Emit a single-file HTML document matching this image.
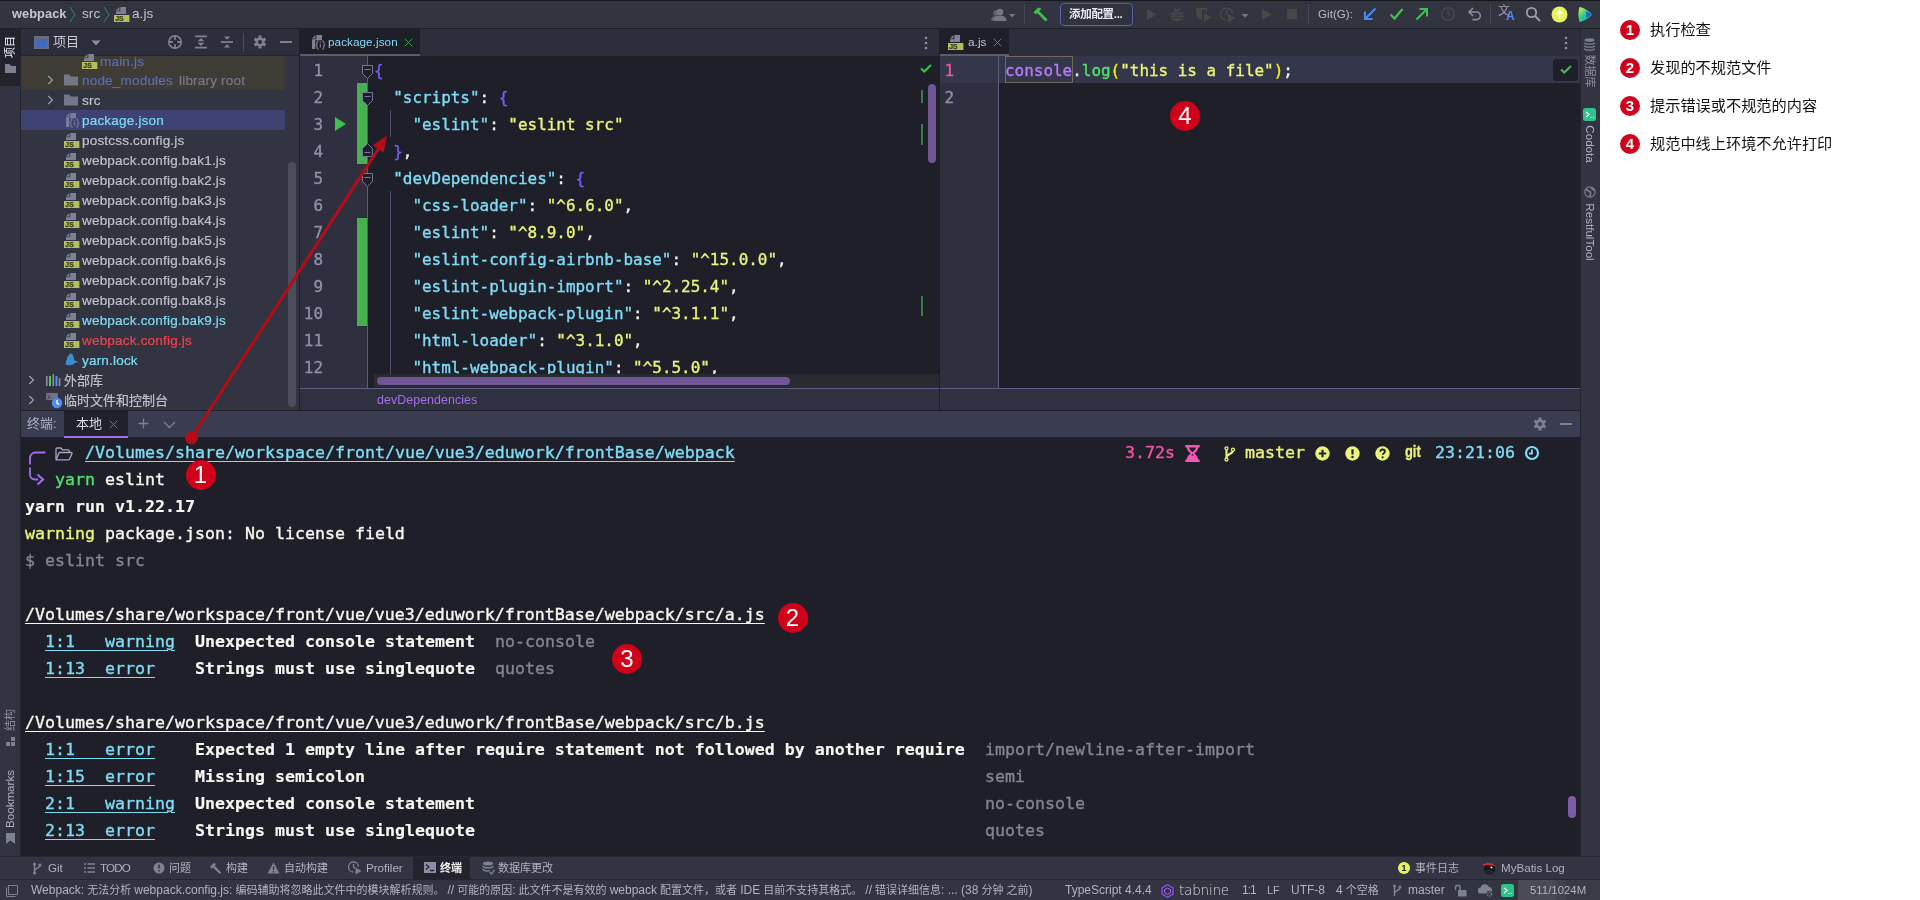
<!DOCTYPE html>
<html lang="zh-CN">
<head>
<meta charset="utf-8">
<title>webpack eslint</title>
<style>
*{box-sizing:border-box;margin:0;padding:0}
html,body{width:1920px;height:900px;overflow:hidden;background:#fff}
body{font-family:"Liberation Sans","Noto Sans CJK SC",sans-serif;font-size:13px;color:#c6c8d1;position:relative}
.abs{position:absolute}
.ui{font-size:13.5px;letter-spacing:0.07px;white-space:nowrap}
.mono{font-family:"DejaVu Sans Mono","Liberation Mono","Noto Sans CJK SC",monospace;font-size:16.6px;letter-spacing:0.006px;white-space:pre}
.mono.ed{font-size:15.95px;letter-spacing:0}
.mono{-webkit-text-stroke:0.35px currentColor}
.mono b{-webkit-text-stroke:0.15px currentColor}
#ide{position:absolute;left:0;top:0;width:1600px;height:900px;background:#1f1f29;overflow:hidden;will-change:transform}
/* top toolbar */
#topbar{left:0;top:0;width:1600px;height:29px;background:#323440;border-top:1px solid #16161d;border-bottom:1px solid #1d1e27}
/* left stripe */
#lstripe{left:0;top:29px;width:21px;height:849px;background:#323442;border-right:1px solid #23242e}
#rstripe{left:1580px;top:29px;width:20px;height:849px;background:#323442;border-left:1px solid #23242e}
/* project panel */
#proj{left:21px;top:29px;width:278px;height:381px;background:#323442;overflow:hidden}
#projhead{left:0;top:0;width:278px;height:27px;background:#2c2e3b;border-bottom:1px solid #23242e}
.row{position:absolute;left:0;width:264px;height:20px;line-height:20px;white-space:nowrap;font-size:13.5px;letter-spacing:0.2px;color:#c0c1c8;-webkit-text-stroke:0.2px currentColor}
.row .cj{font-size:13px;letter-spacing:0}
.row span.t{position:absolute;top:1px}
/* editors */
#ed1{left:300px;top:29px;width:639px;height:381px;background:#1f1f29;overflow:hidden}
#ed2{left:940px;top:29px;width:640px;height:381px;background:#1f1f29;overflow:hidden}
.tabbar{left:0;top:0;width:100%;height:27px;background:#2c2e3b}
.gut{background:#2e3040}
.ln{position:absolute;height:27px;line-height:27px;color:#8f92a8;text-align:right}
.cl{position:absolute;height:27px;line-height:27px}
.k{color:#7fdcf5}.s{color:#eaf37a}.b{color:#6d63f7}.w{color:#f2f2f2}
/* terminal */
#termhead{left:21px;top:411px;width:1559px;height:26px;background:#3a3c52;z-index:2}
#term{left:21px;top:437px;width:1559px;height:419px;background:#1f1f29;overflow:hidden}
.tl{position:absolute;left:4px;height:27px;line-height:27px;color:#f8f8f2}
.u{text-decoration:underline;text-underline-offset:3px;text-decoration-thickness:1px}
.cy{color:#7fdcf5}.gr{color:#84858e}.ye{color:#eaf37a}.gn{color:#50e36a}.pk{color:#f254a8}
b{font-weight:bold}
/* bottom bars */
#toolbar2{left:0;top:856px;width:1600px;height:23px;background:#323442;border-top:1px solid #262731}
#status{left:0;top:879px;width:1600px;height:21px;background:#323442;border-top:1px solid #23242e}
.sb{font-size:11px;line-height:15px;color:#b1b3bf;white-space:nowrap}
.sb .la{font-size:12px;position:relative;top:-0.5px}
/* right notes */
.note{position:absolute;left:1650px;font-size:15.2px;color:#111;line-height:20px;white-space:nowrap;font-family:"Liberation Sans","Noto Sans CJK SC",sans-serif}
.badge{position:absolute;border-radius:50%;background:#d0021b;color:#fff;text-align:center;font-family:"Liberation Sans",sans-serif;font-weight:normal}
</style>
</head>
<body>
<div id="ide">
<div id="topbar" class="abs"><span class="abs ui" style="left:12px;top:5px;font-weight:bold;font-size:12.8px;color:#c3c5cf;line-height:16px">webpack</span>
<svg class="abs" style="left:69px;top:5px" width="8" height="17" viewBox="0 0 8 17"><path d="M1 1l5 7.5L1 16" fill="none" stroke="#2f8f4b" stroke-width="1"/></svg>
<span class="abs ui" style="left:82px;top:5px;color:#c3c5cf;line-height:16px">src</span>
<svg class="abs" style="left:103px;top:5px" width="8" height="17" viewBox="0 0 8 17"><path d="M1 1l5 7.5L1 16" fill="none" stroke="#2f8f4b" stroke-width="1"/></svg>
<svg class="abs" style="left:114px;top:5px" width="16" height="16" viewBox="0 0 16 16"><path d="M6.300000000000001 1H12v7H2V5.300000000000001h4.300000000000001z" fill="#7e8193"/><path d="M2 4.4L5.4 1v3.400000000000001z" fill="#7e8193"/><rect x="0" y="9" width="15.4" height="7" fill="#b3bf5f"/><text x="1.2" y="15.1" font-family="Liberation Sans,sans-serif" font-size="6.8" font-weight="bold" fill="#363c14" stroke="#363c14" stroke-width=".25">JS</text></svg>
<span class="abs ui" style="left:132px;top:5px;color:#c3c5cf;line-height:16px">a.js</span>
<svg class="abs" style="left:990px;top:6px" width="26" height="16" viewBox="0 0 26 16"><circle cx="10" cy="5" r="3.3" fill="#747683"/><path d="M3.5 14c0-4 3-5.500000000000001 6.5-5.500000000000001S16.5 10 16.5 14z" fill="#747683"/><circle cx="6" cy="6" r="2.7" fill="#747683" opacity=".75"/><path d="M1 13.5c0-3 2-4.5 5-4.5l1 4.5z" fill="#747683" opacity=".75"/><path d="M19 7h6.5l-3.25 3.6z" fill="#747683"/></svg>
<div class="abs" style="left:1024px;top:3px;width:1px;height:20px;background:#45475a"></div>
<svg class="abs" style="left:1032px;top:5px" width="17" height="17" viewBox="0 0 17 17"><path d="M1.5 6.2L6.2 1.600000000000001l3.300000000000001 1.1L7.2 5l8.3 8.4-2 2L5.2 7 3.600000000000001 8.6z" fill="#3ec24f"/></svg>
<div class="abs" style="left:1060px;top:2px;width:73px;height:23px;border:1px solid #5560b3;border-radius:4px;background:#30323e"></div>
<span class="abs" style="left:1069px;top:5px;font-size:11.5px;line-height:16px;color:#e8e9ee;font-weight:bold;letter-spacing:-0.3px">添加配置...</span>
<svg class="abs" style="left:1146px;top:7px" width="12" height="13" viewBox="0 0 12 13"><path d="M1 1l10 5.5L1 12z" fill="#484849"/></svg>
<svg class="abs" style="left:1169px;top:5px" width="16" height="16" viewBox="0 0 16 16"><path d="M5 2l1.500000000000001 1.800000000000001M11 2L9.5 3.800000000000001" stroke="#484849" stroke-width="1.3" fill="none"/><path d="M5.2 5.6a2.8 2.6 0 015.6 0z" fill="#484849"/><path d="M3.6 6.4h8.8v4.4a4.4 4.6 0 01-8.8 0z" fill="#484849"/><path d="M1.500000000000001 7.6h2.5M12 7.6h2.5M1.500000000000001 10.6h2.5M12 10.6h2.5M2 14l2.2-1.500000000000001M14 14l-2.2-1.500000000000001" stroke="#484849" stroke-width="1.500000000000001" fill="none"/><path d="M4.6 9h6.800000000000001M4.6 11.9h6.800000000000001" stroke="#323440" stroke-width="0.9"/></svg>
<svg class="abs" style="left:1195px;top:5px" width="17" height="17" viewBox="0 0 17 17"><path d="M1 2h6v12C3.500000000000001 12.5 1 10 1 6z" fill="#484849"/><path d="M7 2h5v4.500000000000001h-1.400000000000001V3.400000000000001H7z" fill="#484849"/><path d="M9 7l7.500000000000001 4.5L9 16z" fill="#484849"/></svg>
<svg class="abs" style="left:1219px;top:5px" width="32" height="17" viewBox="0 0 32 17"><path d="M13.5 8A6 6 0 107.500000000000001 14" fill="none" stroke="#484849" stroke-width="1.5"/><path d="M7.500000000000001 4v4l2.5 2" fill="none" stroke="#484849" stroke-width="1.5"/><path d="M9 8l7.5 4.3L9 16.6z" fill="#484849"/><path d="M22.5 8h7l-3.5 3.800000000000001z" fill="#747683"/></svg>
<svg class="abs" style="left:1261px;top:7px" width="12" height="13" viewBox="0 0 12 13"><path d="M1 1l10 5.5L1 12z" fill="#484849"/></svg>
<div class="abs" style="left:1287px;top:8px;width:10px;height:10px;background:#484849"></div>
<div class="abs" style="left:1308px;top:3px;width:1px;height:20px;background:#45475a"></div>
<span class="abs ui" style="left:1318px;top:5px;color:#b9bbc6;line-height:16px;font-size:11.5px">Git(G):</span>
<svg class="abs" style="left:1363px;top:6px" width="14" height="14" viewBox="0 0 14 14"><path d="M12.5 1.500000000000001L2.5 11.5M2 4.5v7.500000000000001h7.500000000000001" fill="none" stroke="#4c8bf5" stroke-width="2"/></svg>
<svg class="abs" style="left:1389px;top:6px" width="15" height="14" viewBox="0 0 15 14"><path d="M1.500000000000001 7.500000000000001l4 4L13.5 2" fill="none" stroke="#3ec24f" stroke-width="2.2"/></svg>
<svg class="abs" style="left:1415px;top:6px" width="14" height="14" viewBox="0 0 14 14"><path d="M1.500000000000001 12.5L11.5 2.5M4.5 2h7.500000000000001v7.500000000000001" fill="none" stroke="#3ec24f" stroke-width="2"/></svg>
<svg class="abs" style="left:1440px;top:5px" width="16" height="16" viewBox="0 0 16 16"><circle cx="8" cy="8" r="6.3" fill="none" stroke="#484849" stroke-width="1.4"/><path d="M8 4.5V8l2.5 1.500000000000001" fill="none" stroke="#484849" stroke-width="1.4"/></svg>
<svg class="abs" style="left:1467px;top:5px" width="16" height="16" viewBox="0 0 16 16"><path d="M2.5 6h7a3.800000000000001 3.800000000000001 0 010 7.600000000000001H5.5" fill="none" stroke="#8c8fa1" stroke-width="1.600000000000001"/><path d="M6 2L2 6l4 4" fill="none" stroke="#8c8fa1" stroke-width="1.600000000000001"/></svg>
<div class="abs" style="left:1490px;top:3px;width:1px;height:20px;background:#45475a"></div>
<span class="abs" style="left:1498px;top:2px;font-size:12px;line-height:14px;color:#9da0b1;font-family:'Noto Sans CJK SC',sans-serif">文</span><span class="abs" style="left:1506px;top:8px;font-size:12px;line-height:14px;color:#4c8bf5;font-weight:bold;font-family:'Liberation Sans',sans-serif">A</span>
<svg class="abs" style="left:1525px;top:5px" width="16" height="16" viewBox="0 0 16 16"><circle cx="6.5" cy="6.5" r="4.7" fill="none" stroke="#9da0b1" stroke-width="1.8"/><path d="M10 10l5 5" stroke="#9da0b1" stroke-width="2"/></svg>
<svg class="abs" style="left:1551px;top:5px" width="17" height="17" viewBox="0 0 17 17"><circle cx="8.5" cy="8.5" r="8" fill="#e9f35f"/><path d="M8.5 12.5V5M5.5 8l3-3 3 3" fill="none" stroke="#fff" stroke-width="1.600000000000001"/></svg>
<svg class="abs" style="left:1577px;top:5px" width="17" height="17" viewBox="0 0 17 17"><defs><linearGradient id="cg" x1="0" y1="0" x2="1" y2="1"><stop offset="0" stop-color="#f2e94e"/><stop offset=".45" stop-color="#2fcf86"/><stop offset="1" stop-color="#1d8fe8"/></linearGradient></defs><path d="M2.5 1c4 .5 9 3.500000000000001 13 7.500000000000001-4 4-9 7-13 7.500000000000001C1 11 1 6 2.5 1z" fill="url(#cg)"/><path d="M9 5l6.5 3.500000000000001L9 12z" fill="#1b5fd0" opacity=".85"/></svg></div>
<div id="lstripe" class="abs">
<div class="abs" style="left:0;top:0;width:20px;height:57px;background:#22232c"></div>
</div>
<div class="abs" style="left:4px;top:35px;width:12px;height:23px"><span class="abs" style="left:50%;top:50%;transform:translate(-50%,-50%) rotate(-90deg);white-space:nowrap;font-size:11px;line-height:12px;color:#f0f0f4;">项目</span></div>
<svg class="abs" style="left:5px;top:64px" width="11" height="9" viewBox="0 0 11 9"><path d="M0 0h4.500000000000001l1.500000000000001 2H11v7H0z" fill="#7e8193"/></svg>
<div class="abs" style="left:4px;top:708px;width:12px;height:23px"><span class="abs" style="left:50%;top:50%;transform:translate(-50%,-50%) rotate(-90deg);white-space:nowrap;font-size:11px;line-height:12px;color:#8c8fa1;">结构</span></div>
<svg class="abs" style="left:6px;top:737px" width="9" height="9" viewBox="0 0 9 9"><rect x="5" y="0" width="4" height="4" fill="#7e8193"/><rect x="0" y="5" width="4" height="4" fill="#7e8193"/><rect x="5" y="5" width="4" height="4" fill="#7e8193"/></svg>
<div class="abs" style="left:4px;top:770px;width:12px;height:58px"><span class="abs" style="left:50%;top:50%;transform:translate(-50%,-50%) rotate(-90deg);white-space:nowrap;font-size:11.6px;line-height:12px;color:#b1b3bf;">Bookmarks</span></div>
<svg class="abs" style="left:6px;top:833px" width="9" height="11" viewBox="0 0 9 11"><path d="M0 0h9v11L4.500000000000001 7.500000000000001 0 11z" fill="#7e8193"/></svg>
<div id="rstripe" class="abs"></div>
<svg class="abs" style="left:1584px;top:38px" width="11" height="13" viewBox="0 0 11 13"><ellipse cx="5.500000000000001" cy="2" rx="5" ry="1.8" fill="#7e8193"/><path d="M.5 4.5c0 2.2 10 2.2 10 0M.5 7.500000000000001c0 2.2 10 2.2 10 0M.5 10.5c0 2.2 10 2.2 10 0" fill="none" stroke="#7e8193" stroke-width="1.400000000000001"/></svg>
<div class="abs" style="left:1584px;top:54px;width:12px;height:34px"><span class="abs" style="left:50%;top:50%;transform:translate(-50%,-50%) rotate(90deg);white-space:nowrap;font-size:11px;line-height:12px;color:#8c8fa1;">数据库</span></div>
<svg class="abs" style="left:1583px;top:108px" width="13" height="13" viewBox="0 0 13 13"><rect x="0" y="0" width="13" height="13" rx="2.5" fill="#2fc28b"/><path d="M3 4l3 2.5L3 9M7.500000000000001 9.5h1M10 9.5h1" fill="none" stroke="#fff" stroke-width="1.2"/></svg>
<div class="abs" style="left:1584px;top:125px;width:12px;height:38px"><span class="abs" style="left:50%;top:50%;transform:translate(-50%,-50%) rotate(90deg);white-space:nowrap;font-size:11.6px;line-height:12px;color:#b1b3bf;">Codota</span></div>
<svg class="abs" style="left:1584px;top:186px" width="12" height="12" viewBox="0 0 12 12"><circle cx="6" cy="6" r="5.2" fill="none" stroke="#7e8193" stroke-width="1.2"/><path d="M2 3.500000000000001c2 0 2 2 3.500000000000001 2S7 8 5.500000000000001 10.5M7.500000000000001 1.500000000000001c-.5 2 2 2 3 3" fill="none" stroke="#7e8193" stroke-width="1.6"/></svg>
<div class="abs" style="left:1584px;top:203px;width:12px;height:58px"><span class="abs" style="left:50%;top:50%;transform:translate(-50%,-50%) rotate(90deg);white-space:nowrap;font-size:11.6px;line-height:12px;color:#b1b3bf;">RestfulTool</span></div>
<div id="proj" class="abs"><div id="projhead" class="abs">
<svg class="abs" style="left:13px;top:7px" width="15" height="13" viewBox="0 0 15 13"><rect x="0" y="0" width="15" height="13" fill="#6a6d80"/><rect x="1.600000000000001" y="3" width="11.8" height="8.4" fill="#4169c4"/></svg>
<span class="abs" style="left:32px;top:4px;font-size:13px;line-height:18px;color:#c9cbd4">项目</span>
<svg class="abs" style="left:70px;top:11px" width="10" height="6" viewBox="0 0 10 6"><path d="M0.5 0.5h9L5 5.5z" fill="#8c8fa1"/></svg>
<svg class="abs" style="left:146px;top:5px" width="16" height="16" viewBox="0 0 16 16"><circle cx="8" cy="8" r="6.2" fill="none" stroke="#7f8192" stroke-width="1.600000000000001"/><path d="M8 1.500000000000001v4.300000000000001M8 10.2v4.300000000000001M1.500000000000001 8h4.300000000000001M10.2 8h4.300000000000001" stroke="#7f8192" stroke-width="1.8"/></svg>
<svg class="abs" style="left:172px;top:5px" width="16" height="16" viewBox="0 0 16 16"><path d="M2 2.300000000000001h12M2 13.700000000000001h12" stroke="#7f8192" stroke-width="1.8"/><path d="M8 4l3.400000000000001 3.300000000000001H4.6zM8 12l3.400000000000001-3.300000000000001H4.6z" fill="#7f8192"/></svg>
<svg class="abs" style="left:198px;top:5px" width="16" height="16" viewBox="0 0 16 16"><path d="M2 8h12" stroke="#7f8192" stroke-width="1.8"/><path d="M8 5.800000000000001l3.200000000000001-3.300000000000001H4.800000000000001zM8 10.2l3.200000000000001 3.300000000000001H4.800000000000001z" fill="#7f8192"/></svg>
<div class="abs" style="left:222px;top:4px;width:1px;height:19px;background:#4a4c5c"></div>
<svg class="abs" style="left:231.5px;top:6px" width="14" height="14" viewBox="0 0 14 14"><path fill="#7f8192" fill-rule="evenodd" d="M5.45 2.56L5.49 0.57L8.51 0.57L8.55 2.56L10.07 3.44L11.81 2.48L13.32 5.09L11.62 6.12L11.62 7.88L13.32 8.91L11.81 11.52L10.07 10.56L8.55 11.44L8.51 13.43L5.49 13.43L5.45 11.44L3.93 10.56L2.19 11.52L0.68 8.91L2.38 7.88L2.38 6.12L0.68 5.09L2.19 2.48L3.93 3.44zM9.10 7.00a2.1 2.1 0 1 0 -4.20 0a2.1 2.1 0 1 0 4.20 0z"/></svg>
<div class="abs" style="left:259px;top:12px;width:12px;height:2px;background:#7f8192"></div>
</div>
<div class="abs" style="left:0;top:27px;width:264px;height:34px;background:#3f3c35"></div>
<div class="abs" style="left:0;top:81px;width:264px;height:20px;background:#3e4374"></div>
<div class="row" style="top:22px"><svg class="abs" style="left:61px;top:2px" width="16" height="16" viewBox="0 0 16 16"><path d="M6.300000000000001 1H12v7H2V5.300000000000001h4.300000000000001z" fill="#7e8193"/><path d="M2 4.4L5.4 1v3.400000000000001z" fill="#7e8193"/><rect x="0" y="9" width="15.4" height="7" fill="#b3bf5f"/><text x="1.2" y="15.1" font-family="Liberation Sans,sans-serif" font-size="6.8" font-weight="bold" fill="#363c14" stroke="#363c14" stroke-width=".25">JS</text></svg><span class="t" style="left:79px;color:#5f6cb0">main.js</span></div>
<div class="row" style="top:41px"><svg class="abs" style="left:26px;top:4px" width="8" height="12" viewBox="0 0 8 12"><path d="M1.2 2l4.300000000000001 4-4.300000000000001 4" fill="none" stroke="#9da0b1" stroke-width="1.2"/></svg><svg class="abs" style="left:42px;top:2px" width="16" height="16" viewBox="0 0 16 16"><path d="M1 2.5h5.2l1.6 2H15V13.5H1z" fill="#747789"/></svg><span class="t" style="left:61px;color:#5f6cb0">node_modules</span><span class="t" style="left:158px;color:#777a8a">library root</span></div>
<div class="row" style="top:61px"><svg class="abs" style="left:26px;top:4px" width="8" height="12" viewBox="0 0 8 12"><path d="M1.2 2l4.300000000000001 4-4.300000000000001 4" fill="none" stroke="#9da0b1" stroke-width="1.2"/></svg><svg class="abs" style="left:42px;top:2px" width="16" height="16" viewBox="0 0 16 16"><path d="M1 2.5h5.2l1.6 2H15V13.5H1z" fill="#747789"/></svg><span class="t" style="left:61px;color:#c0c1c8">src</span></div>
<div class="row" style="top:81px"><svg class="abs" style="left:43px;top:2px" width="16" height="16" viewBox="0 0 16 16"><path d="M6.300000000000001 1H12v14H2V5.300000000000001h4.300000000000001z" fill="#7a7e9c"/><path d="M2 4.4L5.4 1v3.400000000000001z" fill="#7a7e9c"/><path d="M5.2 6.2H16V16H5.2z" fill="#3e4374"/><path d="M8.6 6.800000000000001c-1.3 0-1.6.6-1.6 1.500000000000001v1.3c0 .8-.4 1.3-1.3 1.400000000000001.9.1 1.3.6 1.3 1.400000000000001v1.3c0 .9.3 1.500000000000001 1.6 1.500000000000001M12.2 6.800000000000001c1.3 0 1.6.6 1.6 1.500000000000001v1.3c0 .8.4 1.3 1.3 1.400000000000001-.9.1-1.3.6-1.3 1.400000000000001v1.3c0 .9-.3 1.500000000000001-1.6 1.500000000000001M10.4 10v3.400000000000001" fill="none" stroke="#7a7e9c" stroke-width="1.1"/><circle cx="10.4" cy="8.3" r=".75" fill="#7a7e9c"/></svg><span class="t" style="left:61px;color:#7fdcf5">package.json</span></div>
<div class="row" style="top:101px"><svg class="abs" style="left:43px;top:2px" width="16" height="16" viewBox="0 0 16 16"><path d="M6.300000000000001 1H12v7H2V5.300000000000001h4.300000000000001z" fill="#7e8193"/><path d="M2 4.4L5.4 1v3.400000000000001z" fill="#7e8193"/><rect x="0" y="9" width="15.4" height="7" fill="#b3bf5f"/><text x="1.2" y="15.1" font-family="Liberation Sans,sans-serif" font-size="6.8" font-weight="bold" fill="#363c14" stroke="#363c14" stroke-width=".25">JS</text></svg><span class="t" style="left:61px;color:#c0c1c8">postcss.config.js</span></div>
<div class="row" style="top:121px"><svg class="abs" style="left:43px;top:2px" width="16" height="16" viewBox="0 0 16 16"><path d="M6.300000000000001 1H12v7H2V5.300000000000001h4.300000000000001z" fill="#7e8193"/><path d="M2 4.4L5.4 1v3.400000000000001z" fill="#7e8193"/><rect x="0" y="9" width="15.4" height="7" fill="#b3bf5f"/><text x="1.2" y="15.1" font-family="Liberation Sans,sans-serif" font-size="6.8" font-weight="bold" fill="#363c14" stroke="#363c14" stroke-width=".25">JS</text></svg><span class="t" style="left:61px;color:#c0c1c8">webpack.config.bak1.js</span></div>
<div class="row" style="top:141px"><svg class="abs" style="left:43px;top:2px" width="16" height="16" viewBox="0 0 16 16"><path d="M6.300000000000001 1H12v7H2V5.300000000000001h4.300000000000001z" fill="#7e8193"/><path d="M2 4.4L5.4 1v3.400000000000001z" fill="#7e8193"/><rect x="0" y="9" width="15.4" height="7" fill="#b3bf5f"/><text x="1.2" y="15.1" font-family="Liberation Sans,sans-serif" font-size="6.8" font-weight="bold" fill="#363c14" stroke="#363c14" stroke-width=".25">JS</text></svg><span class="t" style="left:61px;color:#c0c1c8">webpack.config.bak2.js</span></div>
<div class="row" style="top:161px"><svg class="abs" style="left:43px;top:2px" width="16" height="16" viewBox="0 0 16 16"><path d="M6.300000000000001 1H12v7H2V5.300000000000001h4.300000000000001z" fill="#7e8193"/><path d="M2 4.4L5.4 1v3.400000000000001z" fill="#7e8193"/><rect x="0" y="9" width="15.4" height="7" fill="#b3bf5f"/><text x="1.2" y="15.1" font-family="Liberation Sans,sans-serif" font-size="6.8" font-weight="bold" fill="#363c14" stroke="#363c14" stroke-width=".25">JS</text></svg><span class="t" style="left:61px;color:#c0c1c8">webpack.config.bak3.js</span></div>
<div class="row" style="top:181px"><svg class="abs" style="left:43px;top:2px" width="16" height="16" viewBox="0 0 16 16"><path d="M6.300000000000001 1H12v7H2V5.300000000000001h4.300000000000001z" fill="#7e8193"/><path d="M2 4.4L5.4 1v3.400000000000001z" fill="#7e8193"/><rect x="0" y="9" width="15.4" height="7" fill="#b3bf5f"/><text x="1.2" y="15.1" font-family="Liberation Sans,sans-serif" font-size="6.8" font-weight="bold" fill="#363c14" stroke="#363c14" stroke-width=".25">JS</text></svg><span class="t" style="left:61px;color:#c0c1c8">webpack.config.bak4.js</span></div>
<div class="row" style="top:201px"><svg class="abs" style="left:43px;top:2px" width="16" height="16" viewBox="0 0 16 16"><path d="M6.300000000000001 1H12v7H2V5.300000000000001h4.300000000000001z" fill="#7e8193"/><path d="M2 4.4L5.4 1v3.400000000000001z" fill="#7e8193"/><rect x="0" y="9" width="15.4" height="7" fill="#b3bf5f"/><text x="1.2" y="15.1" font-family="Liberation Sans,sans-serif" font-size="6.8" font-weight="bold" fill="#363c14" stroke="#363c14" stroke-width=".25">JS</text></svg><span class="t" style="left:61px;color:#c0c1c8">webpack.config.bak5.js</span></div>
<div class="row" style="top:221px"><svg class="abs" style="left:43px;top:2px" width="16" height="16" viewBox="0 0 16 16"><path d="M6.300000000000001 1H12v7H2V5.300000000000001h4.300000000000001z" fill="#7e8193"/><path d="M2 4.4L5.4 1v3.400000000000001z" fill="#7e8193"/><rect x="0" y="9" width="15.4" height="7" fill="#b3bf5f"/><text x="1.2" y="15.1" font-family="Liberation Sans,sans-serif" font-size="6.8" font-weight="bold" fill="#363c14" stroke="#363c14" stroke-width=".25">JS</text></svg><span class="t" style="left:61px;color:#c0c1c8">webpack.config.bak6.js</span></div>
<div class="row" style="top:241px"><svg class="abs" style="left:43px;top:2px" width="16" height="16" viewBox="0 0 16 16"><path d="M6.300000000000001 1H12v7H2V5.300000000000001h4.300000000000001z" fill="#7e8193"/><path d="M2 4.4L5.4 1v3.400000000000001z" fill="#7e8193"/><rect x="0" y="9" width="15.4" height="7" fill="#b3bf5f"/><text x="1.2" y="15.1" font-family="Liberation Sans,sans-serif" font-size="6.8" font-weight="bold" fill="#363c14" stroke="#363c14" stroke-width=".25">JS</text></svg><span class="t" style="left:61px;color:#c0c1c8">webpack.config.bak7.js</span></div>
<div class="row" style="top:261px"><svg class="abs" style="left:43px;top:2px" width="16" height="16" viewBox="0 0 16 16"><path d="M6.300000000000001 1H12v7H2V5.300000000000001h4.300000000000001z" fill="#7e8193"/><path d="M2 4.4L5.4 1v3.400000000000001z" fill="#7e8193"/><rect x="0" y="9" width="15.4" height="7" fill="#b3bf5f"/><text x="1.2" y="15.1" font-family="Liberation Sans,sans-serif" font-size="6.8" font-weight="bold" fill="#363c14" stroke="#363c14" stroke-width=".25">JS</text></svg><span class="t" style="left:61px;color:#c0c1c8">webpack.config.bak8.js</span></div>
<div class="row" style="top:281px"><svg class="abs" style="left:43px;top:2px" width="16" height="16" viewBox="0 0 16 16"><path d="M6.300000000000001 1H12v7H2V5.300000000000001h4.300000000000001z" fill="#7e8193"/><path d="M2 4.4L5.4 1v3.400000000000001z" fill="#7e8193"/><rect x="0" y="9" width="15.4" height="7" fill="#b3bf5f"/><text x="1.2" y="15.1" font-family="Liberation Sans,sans-serif" font-size="6.8" font-weight="bold" fill="#363c14" stroke="#363c14" stroke-width=".25">JS</text></svg><span class="t" style="left:61px;color:#7fdcf5">webpack.config.bak9.js</span></div>
<div class="row" style="top:301px"><svg class="abs" style="left:43px;top:2px" width="16" height="16" viewBox="0 0 16 16"><path d="M6.300000000000001 1H12v7H2V5.300000000000001h4.300000000000001z" fill="#7e8193"/><path d="M2 4.4L5.4 1v3.400000000000001z" fill="#7e8193"/><rect x="0" y="9" width="15.4" height="7" fill="#b3bf5f"/><text x="1.2" y="15.1" font-family="Liberation Sans,sans-serif" font-size="6.8" font-weight="bold" fill="#363c14" stroke="#363c14" stroke-width=".25">JS</text></svg><span class="t" style="left:61px;color:#f0454f">webpack.config.js</span></div>
<div class="row" style="top:321px"><svg class="abs" style="left:43px;top:3px" width="15" height="14" viewBox="0 0 15 14"><path d="M7.500000000000001 0.3c1 .5 1.500000000000001 1.500000000000001 1.400000000000001 2.6.9.8 1.3 2 1.1 3.3.1 1.100000000000001.9 1.600000000000001 2.1 1.700000000000001.9.1 1.500000000000001.3 1.500000000000001.8 0 .5-.6.7-1.3.9-1.300000000000001.4-2.1 1.200000000000001-3.2 1.8-1.600000000000001.9-4 1-6.2.5-1-.2-1.500000000000001-.7-1.500000000000001-1.400000000000001 0-.5.3-.9.8-1.100000000000001-.4-1.200000000000001 0-2.3.8-3-.2-1.300000000000001.2-2.500000000000001 1.100000000000001-3.300000000000001C4.800000000000001 2 5.700000000000001.8 7.500000000000001.3z" fill="#3a8ec9"/></svg><span class="t" style="left:61px;color:#7fdcf5">yarn.lock</span></div>
<div class="row" style="top:341px"><svg class="abs" style="left:7px;top:4px" width="8" height="12" viewBox="0 0 8 12"><path d="M1.2 2l4.300000000000001 4-4.300000000000001 4" fill="none" stroke="#9da0b1" stroke-width="1.2"/></svg><svg class="abs" style="left:24px;top:2px" width="16" height="16" viewBox="0 0 16 16"><rect x="1" y="4" width="1.6" height="10" fill="#8c8fa1"/><rect x="4" y="4" width="2" height="10" fill="#4dcb57"/><rect x="7.5" y="2" width="1.6" height="12" fill="#8c8fa1"/><rect x="10.5" y="4" width="2" height="10" fill="#4f8df7"/><rect x="13.800000000000001" y="6" width="1.6" height="8" fill="#8c8fa1"/></svg><span class="t" style="left:43px;color:#c0c1c8"><span class="cj">外部库</span></span></div>
<div class="row" style="top:361px"><svg class="abs" style="left:7px;top:4px" width="8" height="12" viewBox="0 0 8 12"><path d="M1.2 2l4.300000000000001 4-4.300000000000001 4" fill="none" stroke="#9da0b1" stroke-width="1.2"/></svg><svg class="abs" style="left:24px;top:1px" width="18" height="18" viewBox="0 0 18 18"><path d="M1 2h12v7H1z" fill="#6f7284"/><path d="M2.5 4l2.5 2-2.5 2" stroke="#323442" stroke-width="1" fill="none"/><circle cx="12" cy="12" r="5.2" fill="#4f8df7"/><path d="M12 9v3.300000000000001l2.2 1.2" stroke="#fff" stroke-width="1.3" fill="none"/></svg><span class="t" style="left:43px;color:#c0c1c8"><span class="cj">临时文件和控制台</span></span></div>
<div class="abs" style="left:267px;top:133px;width:8px;height:245px;border-radius:4px;background:#4b4d5d"></div></div>
<div id="ed1" class="abs"><div class="tabbar abs"></div>
<div class="abs" style="left:0;top:0;width:120px;height:27px;background:#1f1f29;border-bottom:2px solid #5c5d69"></div>
<svg class="abs" style="left:10px;top:5px" width="16" height="16" viewBox="0 0 16 16"><path d="M6.300000000000001 1H12v14H2V5.300000000000001h4.300000000000001z" fill="#7e8193"/><path d="M2 4.4L5.4 1v3.400000000000001z" fill="#7e8193"/><path d="M5.2 6.2H16V16H5.2z" fill="#20212b"/><path d="M8.6 6.800000000000001c-1.3 0-1.6.6-1.6 1.500000000000001v1.3c0 .8-.4 1.3-1.3 1.400000000000001.9.1 1.3.6 1.3 1.400000000000001v1.3c0 .9.3 1.500000000000001 1.6 1.500000000000001M12.2 6.800000000000001c1.3 0 1.6.6 1.6 1.500000000000001v1.3c0 .8.4 1.3 1.3 1.400000000000001-.9.1-1.3.6-1.3 1.400000000000001v1.3c0 .9-.3 1.500000000000001-1.6 1.500000000000001M10.4 10v3.400000000000001" fill="none" stroke="#7e8193" stroke-width="1.1"/><circle cx="10.4" cy="8.3" r=".75" fill="#7e8193"/></svg>
<span class="abs ui" style="left:28px;top:4px;line-height:18px;font-size:11.7px;color:#7fdcf5">package.json</span>
<svg class="abs" style="left:104px;top:9px" width="9" height="9" viewBox="0 0 9 9"><path d="M0.7 0.7l7.6 7.6M8.3 0.7L0.7 8.3" stroke="#35a24a" stroke-width="1"/></svg>
<svg class="abs" style="left:624px;top:7px" width="4" height="14" viewBox="0 0 4 14"><circle cx="2" cy="2" r="1.3" fill="#8c8fa1"/><circle cx="2" cy="7" r="1.3" fill="#8c8fa1"/><circle cx="2" cy="12" r="1.3" fill="#8c8fa1"/></svg>
<div class="abs" style="left:0;top:27px;width:67px;height:332px;background:#302f40"></div>
<div class="abs" style="left:67px;top:27px;width:1px;height:332px;background:#5b5d7d"></div>
<div class="abs" style="left:57px;top:54px;width:10px;height:81px;background:#47b04f"></div>
<div class="abs" style="left:57px;top:189px;width:10px;height:108px;background:#47b04f"></div>
<div class="ln mono ed" style="left:0;width:23px;top:28px">1</div>
<div class="ln mono ed" style="left:0;width:23px;top:55px">2</div>
<div class="ln mono ed" style="left:0;width:23px;top:82px">3</div>
<div class="ln mono ed" style="left:0;width:23px;top:109px">4</div>
<div class="ln mono ed" style="left:0;width:23px;top:136px">5</div>
<div class="ln mono ed" style="left:0;width:23px;top:163px">6</div>
<div class="ln mono ed" style="left:0;width:23px;top:190px">7</div>
<div class="ln mono ed" style="left:0;width:23px;top:217px">8</div>
<div class="ln mono ed" style="left:0;width:23px;top:244px">9</div>
<div class="ln mono ed" style="left:0;width:23px;top:271px">10</div>
<div class="ln mono ed" style="left:0;width:23px;top:298px">11</div>
<div class="ln mono ed" style="left:0;width:23px;top:325px">12</div>
<svg class="abs" style="left:35px;top:88px" width="11" height="14" viewBox="0 0 11 14"><path d="M0 0l11 7L0 14z" fill="#3ec24f"/></svg>
<div class="abs" style="left:90px;top:81px;width:1px;height:27px;background:#4a4c66"></div>
<div class="abs" style="left:90px;top:162px;width:1px;height:200px;background:#4a4c66"></div>
<svg class="abs" style="left:62.0px;top:36px" width="11" height="14" viewBox="0 0 11 14"><path d="M0.5 0.5h10v8l-5 5-5-5z" fill="#1f1f29" stroke="#77759a" stroke-width="1"/><path d="M2.5 4.5h6" stroke="#77759a" stroke-width="1"/></svg>
<svg class="abs" style="left:62.0px;top:63px" width="11" height="14" viewBox="0 0 11 14"><path d="M0.5 0.5h10v8l-5 5-5-5z" fill="#1f1f29" stroke="#77759a" stroke-width="1"/><path d="M2.5 4.5h6" stroke="#77759a" stroke-width="1"/></svg>
<svg class="abs" style="left:62.0px;top:113.5px" width="11" height="14" viewBox="0 0 11 14"><path d="M0.5 13.5h10v-8l-5-5-5 5z" fill="#1f1f29" stroke="#77759a" stroke-width="1"/><path d="M2.5 9.5h6" stroke="#77759a" stroke-width="1"/></svg>
<svg class="abs" style="left:62.0px;top:144px" width="11" height="14" viewBox="0 0 11 14"><path d="M0.5 0.5h10v8l-5 5-5-5z" fill="#1f1f29" stroke="#77759a" stroke-width="1"/><path d="M2.5 4.5h6" stroke="#77759a" stroke-width="1"/></svg>
<div class="cl mono ed" style="left:74px;top:28px"><span class="b">{</span></div>
<div class="cl mono ed" style="left:74px;top:55px">  <span class="k">"scripts"</span><span class="w">: </span><span class="b">{</span></div>
<div class="cl mono ed" style="left:74px;top:82px">    <span class="k">"eslint"</span><span class="w">: </span><span class="s">"eslint src"</span></div>
<div class="cl mono ed" style="left:74px;top:109px">  <span class="b">}</span><span class="w">,</span></div>
<div class="cl mono ed" style="left:74px;top:136px">  <span class="k">"devDependencies"</span><span class="w">: </span><span class="b">{</span></div>
<div class="cl mono ed" style="left:74px;top:163px">    <span class="k">"css-loader"</span><span class="w">: </span><span class="s">"^6.6.0"</span><span class="w">,</span></div>
<div class="cl mono ed" style="left:74px;top:190px">    <span class="k">"eslint"</span><span class="w">: </span><span class="s">"^8.9.0"</span><span class="w">,</span></div>
<div class="cl mono ed" style="left:74px;top:217px">    <span class="k">"eslint-config-airbnb-base"</span><span class="w">: </span><span class="s">"^15.0.0"</span><span class="w">,</span></div>
<div class="cl mono ed" style="left:74px;top:244px">    <span class="k">"eslint-plugin-import"</span><span class="w">: </span><span class="s">"^2.25.4"</span><span class="w">,</span></div>
<div class="cl mono ed" style="left:74px;top:271px">    <span class="k">"eslint-webpack-plugin"</span><span class="w">: </span><span class="s">"^3.1.1"</span><span class="w">,</span></div>
<div class="cl mono ed" style="left:74px;top:298px">    <span class="k">"html-loader"</span><span class="w">: </span><span class="s">"^3.1.0"</span><span class="w">,</span></div>
<div class="cl mono ed" style="left:74px;top:325px">    <span class="k">"html-webpack-plugin"</span><span class="w">: </span><span class="s">"^5.5.0"</span><span class="w">,</span></div>
<svg class="abs" style="left:620px;top:35px" width="12" height="9" viewBox="0 0 12 9"><path d="M1 4.500000000000001l3.300000000000001 3L11 1" fill="none" stroke="#35c24a" stroke-width="2.2"/></svg>
<div class="abs" style="left:621px;top:61px;width:2px;height:13px;background:#3d7a48"></div>
<div class="abs" style="left:621px;top:95px;width:2px;height:21px;background:#3d7a48"></div>
<div class="abs" style="left:621px;top:267px;width:2px;height:20px;background:#3d7a48"></div>
<div class="abs" style="left:628px;top:55px;width:8px;height:79px;border-radius:4px;background:#6f5596"></div>
<div class="abs" style="left:74px;top:345px;width:565px;height:14px;background:#2a2b30"></div>
<div class="abs" style="left:77px;top:348px;width:413px;height:8px;border-radius:4px;background:#6f5596"></div>
<div class="abs" style="left:0;top:359px;width:639px;height:22px;background:#2f3040;border-top:1px solid #5b5d82"></div>
<span class="abs ui" style="left:77px;top:363px;font-size:12.4px;line-height:16px;color:#a36fe8">devDependencies</span></div>
<div id="ed2" class="abs"><div class="tabbar abs"></div>
<div class="abs" style="left:0;top:0;width:69px;height:27px;background:#1f1f29;border-bottom:2px solid #5c5d69"></div>
<svg class="abs" style="left:8px;top:5px" width="16" height="16" viewBox="0 0 16 16"><path d="M6.300000000000001 1H12v7H2V5.300000000000001h4.300000000000001z" fill="#7e8193"/><path d="M2 4.4L5.4 1v3.400000000000001z" fill="#7e8193"/><rect x="0" y="9" width="15.4" height="7" fill="#b3bf5f"/><text x="1.2" y="15.1" font-family="Liberation Sans,sans-serif" font-size="6.8" font-weight="bold" fill="#363c14" stroke="#363c14" stroke-width=".25">JS</text></svg>
<span class="abs ui" style="left:28px;top:4px;line-height:18px;font-size:11.7px;color:#c3c5cf">a.js</span>
<svg class="abs" style="left:53px;top:9px" width="9" height="9" viewBox="0 0 9 9"><path d="M0.7 0.7l7.6 7.6M8.3 0.7L0.7 8.3" stroke="#35a24a" stroke-width="1"/></svg>
<svg class="abs" style="left:624px;top:7px" width="4" height="14" viewBox="0 0 4 14"><circle cx="2" cy="2" r="1.3" fill="#8c8fa1"/><circle cx="2" cy="7" r="1.3" fill="#8c8fa1"/><circle cx="2" cy="12" r="1.3" fill="#8c8fa1"/></svg>
<div class="abs" style="left:0;top:27px;width:58px;height:332px;background:#302f40"></div>
<div class="abs" style="left:0;top:27px;width:640px;height:27px;background:#343649"></div>
<div class="abs" style="left:58px;top:27px;width:1px;height:332px;background:#5b5d7d"></div>
<div class="ln mono ed" style="left:0;width:14px;top:28px;color:#f254a8">1</div>
<div class="ln mono ed" style="left:0;width:14px;top:55px">2</div>
<div class="abs" style="left:65px;top:27px;width:68px;height:27px;border:1px solid #6f6a5b"></div>
<div class="cl mono ed" style="left:65px;top:28px"><span style="color:#b77bf7">console</span><span class="w">.</span><span style="color:#50e36a">log</span><span style="color:#f4f01a">(</span><span class="s">"this is a file"</span><span style="color:#f4f01a">)</span><span class="w">;</span></div>
<div class="abs" style="left:613px;top:30px;width:25px;height:22px;border-radius:3px;background:#1f1f29"></div>
<svg class="abs" style="left:620px;top:36px" width="12" height="9" viewBox="0 0 12 9"><path d="M1 4.500000000000001l3.300000000000001 3L11 1" fill="none" stroke="#35c24a" stroke-width="2.2"/></svg>
<div class="abs" style="left:0;top:359px;width:640px;height:22px;background:#2f3040;border-top:1px solid #5b5d82"></div></div>
<div id="termhead" class="abs">
<span class="abs" style="left:6px;top:4px;font-size:13px;line-height:18px;color:#b4b6c2">终端:</span>
<div class="abs" style="left:43px;top:0;width:64px;height:27px;background:#20212b;border-bottom:2px solid #a36fe8"></div>
<span class="abs" style="left:55px;top:4px;font-size:13px;line-height:18px;color:#d6d8e0">本地</span>
<svg class="abs" style="left:88px;top:9px" width="9" height="9" viewBox="0 0 9 9"><path d="M0.7 0.7l7.6 7.6M8.3 0.7L0.7 8.3" stroke="#35a24a" stroke-width="1"/></svg>
<svg class="abs" style="left:117px;top:7px" width="11" height="11" viewBox="0 0 11 11"><path d="M5.5 0.5v10M0.5 5.5h10" stroke="#7e8193" stroke-width="1.3"/></svg>
<svg class="abs" style="left:142px;top:10px" width="13" height="8" viewBox="0 0 13 8"><path d="M1 1l5.5 5.5L12 1" fill="none" stroke="#7e8193" stroke-width="1.3"/></svg>
<svg class="abs" style="left:1512px;top:6px" width="14" height="14" viewBox="0 0 14 14"><path fill="#7e8193" fill-rule="evenodd" d="M5.45 2.56L5.49 0.57L8.51 0.57L8.55 2.56L10.07 3.44L11.81 2.48L13.32 5.09L11.62 6.12L11.62 7.88L13.32 8.91L11.81 11.52L10.07 10.56L8.55 11.44L8.51 13.43L5.49 13.43L5.45 11.44L3.93 10.56L2.19 11.52L0.68 8.91L2.38 7.88L2.38 6.12L0.68 5.09L2.19 2.48L3.93 3.44zM9.10 7.00a2.1 2.1 0 1 0 -4.20 0a2.1 2.1 0 1 0 4.20 0z"/></svg>
<div class="abs" style="left:1539px;top:12px;width:12px;height:1.5px;background:#7e8193"></div>
</div>
<div id="term" class="abs">
<svg class="abs" style="left:5px;top:12px" width="22" height="40" viewBox="0 0 22 40"><path d="M19.5 3.5H9.5a5.5 5.5 0 00-5.500000000000001 5.500000000000001V15.5" fill="none" stroke="#a36fe8" stroke-width="1.8"/><path d="M4 18.5V25.5a5 5 0 005 5H12" fill="none" stroke="#a36fe8" stroke-width="1.8"/><path d="M11.5 25.5l5.500000000000001 5-5.500000000000001 5" fill="none" stroke="#a36fe8" stroke-width="2.1"/></svg>
<svg class="abs" style="left:34px;top:10px" width="18" height="14" viewBox="0 0 18 14"><path d="M1 12.5V2.2c0-.7.5-1.200000000000001 1.200000000000001-1.200000000000001h3.6l1.7 1.8h5.6c.7 0 1.200000000000001.5 1.200000000000001 1.200000000000001V5.5" fill="none" stroke="#a9a4c4" stroke-width="1.3"/><path d="M1.2 12.8l2.6-6.600000000000001c.2-.5.6-.7 1.1-.7h11.3c.7 0 1 .6.7 1.200000000000001l-2.4 5.500000000000001c-.2.5-.6.7-1.1.7H1.5z" fill="none" stroke="#a9a4c4" stroke-width="1.3"/></svg>
<div class="tl mono " style="left:64px;top:2px;"><span class="u cy">/Volumes/share/workspace/front/vue/vue3/eduwork/frontBase/webpack</span></div>
<div class="tl mono " style="left:1104px;top:2px;"><span class="pk">3.72s</span></div>
<svg class="abs" style="left:1164px;top:8px" width="15" height="17" viewBox="0 0 15 17"><path d="M0.3 0h14.4v2.6h-1.6c0 3.2-2.400000000000001 4.4-3.6 5.900000000000001 1.200000000000001 1.500000000000001 3.6 2.700000000000001 3.6 5.900000000000001h1.6V17H0.3v-2.6h1.6c0-3.2 2.400000000000001-4.4 3.6-5.900000000000001C4.300000000000001 7 1.900000000000001 5.800000000000001 1.900000000000001 2.600000000000001H0.3z" fill="#f258b4"/><path d="M4 2.600000000000001h7c-.2 2-1.8 3-3.500000000000001 4.700000000000001C5.800000000000001 5.600000000000001 4.2 4.600000000000001 4 2.600000000000001z" fill="#1f1f29"/><path d="M6.2 10.4c.5-.5 1-.9 1.3-1.3.3.4.8.8 1.3 1.3z" fill="#1f1f29"/></svg>
<svg class="abs" style="left:1203px;top:8.5px" width="12" height="16" viewBox="0 0 12 16"><path d="M2.5 3v10M9 4.5c0 4-6.500000000000001 3-6.500000000000001 7" fill="none" stroke="#eaf37a" stroke-width="2.1"/><circle cx="2.5" cy="2.3" r="1.5" fill="#1f1f29" stroke="#eaf37a" stroke-width="1.3"/><circle cx="2.5" cy="13.5" r="1.5" fill="#1f1f29" stroke="#eaf37a" stroke-width="1.3"/><circle cx="9" cy="3.7" r="1.5" fill="#1f1f29" stroke="#eaf37a" stroke-width="1.3"/></svg>
<div class="tl mono " style="left:1224px;top:2px;"><span class="ye">master</span></div>
<svg class="abs" style="left:1293.5px;top:8.800000000000011px" width="15" height="15" viewBox="0 0 15 15"><circle cx="7.5" cy="7.5" r="7.2" fill="#eaf37a"/><path d="M7.500000000000001 3.8v7.4M3.8 7.500000000000001h7.4" stroke="#1f1f29" stroke-width="2.1" fill="none"/></svg>
<svg class="abs" style="left:1323.5px;top:8.800000000000011px" width="15" height="15" viewBox="0 0 15 15"><circle cx="7.5" cy="7.5" r="7.2" fill="#eaf37a"/><path d="M7.500000000000001 3.3v5.2" stroke="#1f1f29" stroke-width="2.2" fill="none"/><circle cx="7.500000000000001" cy="11" r="1.25" fill="#1f1f29"/></svg>
<svg class="abs" style="left:1353.5px;top:8.800000000000011px" width="15" height="15" viewBox="0 0 15 15"><circle cx="7.5" cy="7.5" r="7.2" fill="#eaf37a"/><path d="M5.300000000000001 5.800000000000001c0-1.500000000000001 1-2.3 2.3-2.3 1.3 0 2.300000000000001.8 2.300000000000001 2 0 1.700000000000001-2.2 1.600000000000001-2.2 3.300000000000001" stroke="#1f1f29" stroke-width="1.8" fill="none"/><circle cx="7.600000000000001" cy="11.3" r="1.1500000000000001" fill="#1f1f29"/></svg>
<span id="gitlbl" class="abs" style="left:1383.5px;top:4px;font:bold 16.5px/20px 'Liberation Sans',sans-serif;color:#eaf37a;transform:scaleX(0.78);transform-origin:0 0;-webkit-text-stroke:0.3px #eaf37a">git</span>
<div class="tl mono " style="left:1414px;top:2px;"><span class="cy">23:21:06</span></div>
<svg class="abs" style="left:1503px;top:8px" width="16" height="16" viewBox="0 0 16 16"><circle cx="8" cy="8" r="6" fill="none" stroke="#7fdcf5" stroke-width="2.2"/><path d="M8 4.5V8.5H5" fill="none" stroke="#7fdcf5" stroke-width="1.8"/></svg>
<div class="tl mono " style="left:34px;top:29px;"><span class="gn">yarn</span> eslint</div>
<div class="tl mono " style="left:4px;top:56px;"><b>yarn run v1.22.17</b></div>
<div class="tl mono " style="left:4px;top:83px;"><span class="ye">warning</span> package.json: No license field</div>
<div class="tl mono " style="left:4px;top:110px;"><span class="gr">$ eslint src</span></div>
<div class="tl mono " style="left:4px;top:164px;"><span class="u">/Volumes/share/workspace/front/vue/vue3/eduwork/frontBase/webpack/src/a.js</span></div>
<div class="tl mono " style="left:24px;top:191px;"><span class="u cy">1:1   warning</span></div>
<div class="tl mono " style="left:174px;top:191px;"><b>Unexpected console statement</b></div>
<div class="tl mono " style="left:474px;top:191px;"><span class="gr">no-console</span></div>
<div class="tl mono " style="left:24px;top:218px;"><span class="u cy">1:13  error</span></div>
<div class="tl mono " style="left:174px;top:218px;"><b>Strings must use singlequote</b></div>
<div class="tl mono " style="left:474px;top:218px;"><span class="gr">quotes</span></div>
<div class="tl mono " style="left:4px;top:272px;"><span class="u">/Volumes/share/workspace/front/vue/vue3/eduwork/frontBase/webpack/src/b.js</span></div>
<div class="tl mono " style="left:24px;top:299px;"><span class="u cy">1:1   error</span></div>
<div class="tl mono " style="left:174px;top:299px;"><b>Expected 1 empty line after require statement not followed by another require</b></div>
<div class="tl mono " style="left:964px;top:299px;"><span class="gr">import/newline-after-import</span></div>
<div class="tl mono " style="left:24px;top:326px;"><span class="u cy">1:15  error</span></div>
<div class="tl mono " style="left:174px;top:326px;"><b>Missing semicolon</b></div>
<div class="tl mono " style="left:964px;top:326px;"><span class="gr">semi</span></div>
<div class="tl mono " style="left:24px;top:353px;"><span class="u cy">2:1   warning</span></div>
<div class="tl mono " style="left:174px;top:353px;"><b>Unexpected console statement</b></div>
<div class="tl mono " style="left:964px;top:353px;"><span class="gr">no-console</span></div>
<div class="tl mono " style="left:24px;top:380px;"><span class="u cy">2:13  error</span></div>
<div class="tl mono " style="left:174px;top:380px;"><b>Strings must use singlequote</b></div>
<div class="tl mono " style="left:964px;top:380px;"><span class="gr">quotes</span></div>
<div class="abs" style="left:1547px;top:359px;width:8px;height:22px;border-radius:4px;background:#7d5ba6"></div>
</div>
<div id="toolbar2" class="abs">
<div class="abs" style="left:413px;top:0;width:57px;height:22px;background:#22232c"></div>
<svg class="abs" style="left:32px;top:5px" width="10" height="13" viewBox="0 0 10 13"><path d="M2.5 2v9M8 3.5c0 3-5.500000000000001 2.5-5.500000000000001 5.500000000000001" fill="none" stroke="#7e8193" stroke-width="1.5"/><circle cx="2.5" cy="2" r="1.6" fill="#7e8193"/><circle cx="2.5" cy="11" r="1.6" fill="#7e8193"/><circle cx="8" cy="3" r="1.6" fill="#7e8193"/></svg>
<span class="abs" style="left:48px;top:3px;font-size:11.6px;line-height:15px;color:#b1b3bf;white-space:nowrap;">Git</span>
<svg class="abs" style="left:84px;top:6px" width="11" height="10" viewBox="0 0 11 10"><path d="M0 1h2M3.5 1H11M0 5h2M3.5 5H11M0 9h2M3.5 9H11" stroke="#7e8193" stroke-width="1.600000000000001"/></svg>
<span class="abs" style="left:100px;top:3px;font-size:11.6px;line-height:15px;color:#b1b3bf;white-space:nowrap;"><span style="letter-spacing:-0.8px">TODO</span></span>
<svg class="abs" style="left:153px;top:5px" width="12" height="12" viewBox="0 0 12 12"><circle cx="6" cy="6" r="5.500000000000001" fill="#7e8193"/><path d="M6 2.5v4M6 8v1.600000000000001" stroke="#323442" stroke-width="1.600000000000001"/></svg>
<span class="abs" style="left:169px;top:4px;font-size:11px;line-height:15px;color:#b1b3bf;white-space:nowrap;">问题</span>
<svg class="abs" style="left:209px;top:5px" width="13" height="13" viewBox="0 0 13 13"><path d="M1 4.800000000000001L4.800000000000001 1l2.600000000000001 1L5.700000000000001 3.7l6.5 6.700000000000001-1.600000000000001 1.600000000000001L4 5.500000000000001 2.800000000000001 6.700000000000001z" fill="#7e8193"/></svg>
<span class="abs" style="left:226px;top:4px;font-size:11px;line-height:15px;color:#b1b3bf;white-space:nowrap;">构建</span>
<svg class="abs" style="left:267px;top:5px" width="13" height="12" viewBox="0 0 13 12"><path d="M6.5 0.5L12.5 11.5H0.5z" fill="#7e8193"/><path d="M6.5 4.5v3.5M6.5 9v1.500000000000001" stroke="#323442" stroke-width="1.3"/></svg>
<span class="abs" style="left:284px;top:4px;font-size:11px;line-height:15px;color:#b1b3bf;white-space:nowrap;">自动构建</span>
<svg class="abs" style="left:348px;top:4px" width="14" height="14" viewBox="0 0 14 14"><path d="M10.5 5.500000000000001A5 5 0 105.500000000000001 11" fill="none" stroke="#7e8193" stroke-width="1.3"/><path d="M5.500000000000001 3v3l2 1.500000000000001" fill="none" stroke="#7e8193" stroke-width="1.3"/><path d="M7.500000000000001 6.500000000000001l6 3.500000000000001-6 3.500000000000001z" fill="#7e8193"/></svg>
<span class="abs" style="left:366px;top:3px;font-size:11.6px;line-height:15px;color:#b1b3bf;white-space:nowrap;">Profiler</span>
<svg class="abs" style="left:424px;top:5px" width="12" height="11" viewBox="0 0 12 11"><rect x="0" y="0" width="12" height="11" fill="#8c8fa3"/><path d="M2 2.5l3 2.5-3 2.5M6 8.5h4" fill="none" stroke="#22232c" stroke-width="1.3"/></svg>
<span class="abs" style="left:440px;top:4px;font-size:11px;line-height:15px;color:#f2f2f5;white-space:nowrap;font-weight:bold;">终端</span>
<svg class="abs" style="left:482px;top:4px" width="13" height="14" viewBox="0 0 13 14"><ellipse cx="6" cy="2.5" rx="5" ry="2" fill="#7e8193"/><path d="M1 5c0 2.4 10 2.4 10 0M1 8c0 2.4 6 2.2 7 1.500000000000001" fill="none" stroke="#7e8193" stroke-width="1.5"/><path d="M7.500000000000001 11l2 2 3-4" fill="none" stroke="#7e8193" stroke-width="1.3"/></svg>
<span class="abs" style="left:498px;top:4px;font-size:11px;line-height:15px;color:#b1b3bf;white-space:nowrap;">数据库更改</span>
<div class="abs" style="left:1398px;top:5px;width:12px;height:12px;border-radius:50%;background:#e9f35f;color:#23242e;font:bold 9px/12px 'Liberation Sans',sans-serif;text-align:center">1</div>
<span class="abs" style="left:1415px;top:4px;font-size:11px;line-height:15px;color:#b1b3bf;white-space:nowrap;">事件日志</span>
<svg class="abs" style="left:1481px;top:3px" width="17" height="16" viewBox="0 0 17 16"><ellipse cx="8.5" cy="9" rx="5.500000000000001" ry="5.500000000000001" fill="#15151a"/><path d="M2 11c2 3 6 4.5 10 2.5L15.5 10c-3 1-5 1-7-.5z" fill="#24242b"/><path d="M3 4.5c2-2 6-2.5 9-.5l2.500000000000001 2c-4-1-8-1-11.5-.5z" fill="#d22a35"/><path d="M1.500000000000001 3l3 2-2.500000000000001.5z" fill="#d22a35"/><circle cx="10.5" cy="7.500000000000001" r="1" fill="#fff"/></svg>
<span class="abs" style="left:1501px;top:3px;font-size:11.6px;line-height:15px;color:#b1b3bf;white-space:nowrap;">MyBatis Log</span>
</div>
<div id="status" class="abs">
<svg class="abs" style="left:6px;top:5px" width="12" height="12" viewBox="0 0 12 12"><path d="M2.5 0.5h9v9h-9z" fill="none" stroke="#7e8193" stroke-width="1"/><path d="M0.5 2.5v9h9" fill="none" stroke="#7e8193" stroke-width="1"/></svg>
<span class="abs sb " style="left:31px;top:3px"><span class="la">Webpack:</span> 无法分析 <span class="la">webpack.config.js:</span> 编码辅助将忽略此文件中的模块解析规则。 <span class="la">//</span> 可能的原因<span class="la">:</span> 此文件不是有效的 <span class="la">webpack</span> 配置文件，或者 <span class="la">IDE</span> 目前不支持其格式。 <span class="la">//</span> 错误详细信息<span class="la">: ... (38</span> 分钟 之前<span class="la">)</span></span>
<span class="abs sb " style="left:1065px;top:3px"><span class="la">TypeScript 4.4.4</span></span>
<svg class="abs" style="left:1161px;top:4px" width="13" height="14" viewBox="0 0 13 14"><path d="M6.5 0.7l5.500000000000001 3.2v6.2l-5.500000000000001 3.2L1 10.1V3.9z" fill="none" stroke="#8e4df0" stroke-width="1.3"/><path d="M6.5 4l3 1.700000000000001v3l-3 1.700000000000001-3-1.700000000000001v-3z" fill="none" stroke="#b06cf7" stroke-width="1"/></svg>
<span class="abs" style="left:1179px;top:1px;font:13.5px/18px 'DejaVu Sans','Liberation Sans',sans-serif;color:#d9dae2;letter-spacing:-0.2px;font-weight:200">tabnine</span>
<span class="abs sb " style="left:1242px;top:3px"><span class="la" style="letter-spacing:-1px">1:1</span></span>
<span class="abs sb " style="left:1267px;top:3px"><span class="la" style="font-size:11px">LF</span></span>
<span class="abs sb " style="left:1291px;top:3px"><span class="la">UTF-8</span></span>
<span class="abs sb " style="left:1336px;top:3px"><span class="la">4</span> 个空格</span>
<svg class="abs" style="left:1392px;top:4px" width="10" height="14" viewBox="0 0 10 14"><path d="M2.5 2v10M8 3.500000000000001c0 3.500000000000001-5.500000000000001 2.5-5.500000000000001 6" fill="none" stroke="#7e8193" stroke-width="1.5"/><circle cx="2.5" cy="2" r="1.5" fill="#7e8193"/><circle cx="8" cy="3" r="1.5" fill="#7e8193"/></svg>
<span class="abs sb " style="left:1408px;top:3px"><span class="la">master</span></span>
<svg class="abs" style="left:1454px;top:4px" width="13" height="13" viewBox="0 0 13 13"><rect x="4" y="6" width="8.5" height="6.5" fill="#7e8193"/><path d="M1.500000000000001 6V3.500000000000001a2.3 2.3 0 014.6 0V6" fill="none" stroke="#7e8193" stroke-width="1.4"/></svg>
<svg class="abs" style="left:1477px;top:3px" width="17" height="15" viewBox="0 0 17 15"><path d="M4 10.5a3 3 0 01-.3-6A4.2 4.2 0 0111.8 4a3.3 3.3 0 011.7 6.2L9 10.5z" fill="#7e8193"/><circle cx="12.5" cy="11" r="3.2" fill="#323442"/><circle cx="12.5" cy="11" r="2" fill="none" stroke="#7e8193" stroke-width="1.400000000000001" stroke-dasharray="1.2 0.9"/></svg>
<svg class="abs" style="left:1501px;top:4px" width="13" height="13" viewBox="0 0 13 13"><rect x="0" y="0" width="13" height="13" rx="2.5" fill="#2fc28b"/><path d="M3 4l3 2.5L3 9M7.500000000000001 9.5h1M10 9.5h1" fill="none" stroke="#fff" stroke-width="1.2"/></svg>
<div class="abs" style="left:1518px;top:0;width:82px;height:20px;background:#3a3b45"></div>
<div class="abs" style="left:1518px;top:0;width:38px;height:20px;background:#4a4b52"></div>
<div class="abs" style="left:1556px;top:0;width:10px;height:20px;background:#42434b"></div>
<span class="abs sb " style="left:1530px;top:3px"><span class="la" style="font-size:11.4px">511/1024M</span></span>
</div>
</div>
<div id="notes" class="abs" style="left:0;top:0;width:1920px;height:900px;will-change:transform;pointer-events:none">
<div class="badge" style="left:1620px;top:20px;width:20px;height:20px;font-size:15px;line-height:20px;font-weight:bold">1</div>
<div class="note" style="top:20px">执行检查</div>
<div class="badge" style="left:1620px;top:58px;width:20px;height:20px;font-size:15px;line-height:20px;font-weight:bold">2</div>
<div class="note" style="top:58px">发现的不规范文件</div>
<div class="badge" style="left:1620px;top:96px;width:20px;height:20px;font-size:15px;line-height:20px;font-weight:bold">3</div>
<div class="note" style="top:96px">提示错误或不规范的内容</div>
<div class="badge" style="left:1620px;top:134px;width:20px;height:20px;font-size:15px;line-height:20px;font-weight:bold">4</div>
<div class="note" style="top:134px">规范中线上环境不允许打印</div>
</div>
<svg class="abs" style="left:0;top:0;pointer-events:none" width="1600" height="900" viewBox="0 0 1600 900"><line x1="191.5" y1="438" x2="379" y2="148" stroke="#b50d17" stroke-width="3"/><circle cx="191.5" cy="438" r="6.5" fill="#b50d17"/><path d="M387 135.5L383.8 152.5 372.8 145.2z" fill="#b50d17"/></svg>
<div class="badge" style="left:185.5px;top:460px;width:30px;height:30px;font-size:24px;line-height:30px">1</div>
<div class="badge" style="left:777.5px;top:603px;width:30px;height:30px;font-size:24px;line-height:30px">2</div>
<div class="badge" style="left:612px;top:644px;width:30px;height:30px;font-size:24px;line-height:30px">3</div>
<div class="badge" style="left:1170px;top:101px;width:30px;height:30px;font-size:24px;line-height:30px">4</div>
</body>
</html>
